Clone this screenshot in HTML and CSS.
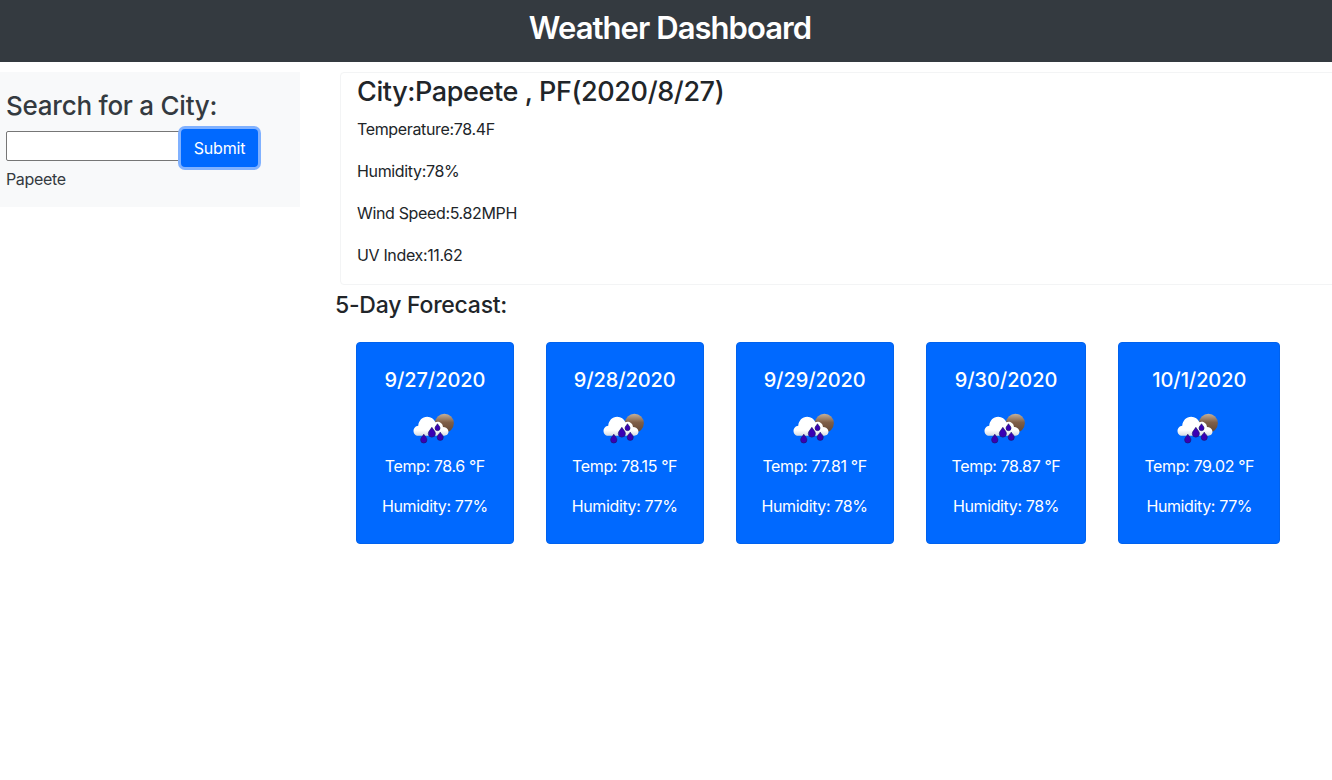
FILE: index.html
```html
<!DOCTYPE html>
<html lang="en">
<head>
    <meta charset="UTF-8">
    <meta name="viewport" content="width=device-width, initial-scale=1.0">
    <title>Weather Dashboard</title>
    <link rel="stylesheet" href="styles.css">
</head>
<body>
    <svg class="sprite" width="0" height="0">
        <defs>
            <linearGradient id="moon-fill" x1="0" y1="0" x2="0" y2="1">
                <stop offset="0" stop-color="#c4b09a"/>
                <stop offset="0.45" stop-color="#7f5f48"/>
                <stop offset="1" stop-color="#5f4636"/>
            </linearGradient>
            <linearGradient id="cloud-fill" x1="0" y1="0" x2="0" y2="1">
                <stop offset="0" stop-color="#ffffff"/>
                <stop offset="0.7" stop-color="#ffffff"/>
                <stop offset="1" stop-color="#d5dbe2"/>
            </linearGradient>
            <symbol id="rain-icon" viewBox="0 0 42 32">
                <circle cx="30" cy="10.5" r="9" fill="url(#moon-fill)"/>
                <path fill="url(#cloud-fill)" d="M5 22.5C2.2 22.5 .5 20.3 .5 17.9 .5 15.2 2.4 13 5 12.8 5.4 8.2 8.8 4.4 13.6 4.4 17.2 4.4 20 6.4 21.4 9.6 22.6 9 24.2 8.9 25.6 9.6 27.6 10.5 28.6 12.4 28.6 14.2 31 14.2 33.4 15.6 33.8 18 34.2 20.6 32.2 22.5 29.8 22.5Z"/>
                <path fill="#3a00b4" stroke="#1a1a6a" stroke-width=".6" d="M10.3 21C11.6 23.2 13.3 24.4 13.3 26.4A3 3 0 0 1 7.3 26.4C7.3 24.4 9 23.2 10.3 21Z"/>
                <path fill="#3a00b4" stroke="#1a1a6a" stroke-width=".6" d="M18 14.4C19.5 17 21.4 18.2 21.4 20.4A3.4 3.4 0 0 1 14.6 20.4C14.6 18.2 16.5 17 18 14.4Z"/>
                <path fill="#3a00b4" stroke="#1a1a6a" stroke-width=".6" d="M23.4 11C24.4 12.8 25.8 13.6 25.8 15.2A2.4 2.4 0 0 1 21 15.2C21 13.6 22.4 12.8 23.4 11Z"/>
                <path fill="#3a00b4" stroke="#1a1a6a" stroke-width=".6" d="M26 19C27.2 21 28.9 22 28.9 24A2.9 2.9 0 0 1 23.1 24C23.1 22 24.8 21 26 19Z"/>
            </symbol>
        </defs>
    </svg>

    <header class="header">
        <h1 class="title">Weather Dashboard</h1>
    </header>

    <div class="layout">
        <aside class="sidebar">
            <h2 class="search-title">Search for a City:</h2>
            <form class="search-form">
                <input class="search-input" type="text" aria-label="City">
                <button class="submit-btn" type="button">Submit</button>
            </form>
            <p class="history-item">Papeete</p>
        </aside>

        <main class="main">
            <section class="current">
                <h2 class="current-title">City:Papeete , PF(2020/8/27)</h2>
                <p class="current-row">Temperature:78.4F</p>
                <p class="current-row">Humidity:78%</p>
                <p class="current-row">Wind Speed:5.82MPH</p>
                <p class="current-row">UV Index:11.62</p>
            </section>

            <h3 class="forecast-title">5-Day Forecast:</h3>
            <div class="forecast">
                <div class="day-card">
                    <h4 class="day-date">9/27/2020</h4>
                    <svg class="day-icon"><use href="#rain-icon"/></svg>
                    <p class="day-text">Temp: 78.6 °F</p>
                    <p class="day-text">Humidity: 77%</p>
                </div>
                <div class="day-card">
                    <h4 class="day-date">9/28/2020</h4>
                    <svg class="day-icon"><use href="#rain-icon"/></svg>
                    <p class="day-text">Temp: 78.15 °F</p>
                    <p class="day-text">Humidity: 77%</p>
                </div>
                <div class="day-card">
                    <h4 class="day-date">9/29/2020</h4>
                    <svg class="day-icon"><use href="#rain-icon"/></svg>
                    <p class="day-text">Temp: 77.81 °F</p>
                    <p class="day-text">Humidity: 78%</p>
                </div>
                <div class="day-card">
                    <h4 class="day-date">9/30/2020</h4>
                    <svg class="day-icon"><use href="#rain-icon"/></svg>
                    <p class="day-text">Temp: 78.87 °F</p>
                    <p class="day-text">Humidity: 78%</p>
                </div>
                <div class="day-card">
                    <h4 class="day-date">10/1/2020</h4>
                    <svg class="day-icon"><use href="#rain-icon"/></svg>
                    <p class="day-text">Temp: 79.02 °F</p>
                    <p class="day-text">Humidity: 77%</p>
                </div>
            </div>
        </main>
    </div>
</body>
</html>
```

FILE: styles.css
```css
* {
    margin: 0;
    padding: 0;
    box-sizing: border-box;
}

html, body {
    overflow-x: hidden;
}

body {
    font-family: Inter, "Liberation Sans", sans-serif;
    font-size: 16px;
    line-height: 24px;
    color: #212529;
    background: #ffffff;
}

.sprite {
    display: block;
    height: 0;
}

.header {
    height: 62px;
    background: #343a40;
    display: flex;
    justify-content: center;
    padding-top: 9px;
}

.title {
    font-size: 31px;
    line-height: 38px;
    font-weight: 600;
    letter-spacing: -0.95px;
    color: #ffffff;
    margin-left: 8px;
}

.layout {
    display: flex;
    align-items: flex-start;
    gap: 40px;
    padding-top: 10px;
}

.sidebar {
    flex: 0 0 300px;
    height: 135px;
    background: #f8f9fa;
    padding: 18px 6px 0;
    color: #343a40;
}

.search-title {
    font-size: 26px;
    line-height: 32px;
    font-weight: 500;
    letter-spacing: -0.25px;
}

.search-form {
    display: flex;
    align-items: flex-start;
    margin-top: 9px;
}

.search-input {
    width: 175px;
    height: 30px;
    border: 1px solid #767676;
    border-radius: 2px;
    background: #ffffff;
}

.submit-btn {
    width: 77px;
    height: 38px;
    margin-top: -2px;
    border: none;
    border-radius: 4px;
    background: #0069ff;
    box-shadow: 0 0 0 3px #80b1ff;
    color: #ffffff;
    font-family: inherit;
    font-size: 16px;
    letter-spacing: -0.2px;
}

.history-item {
    letter-spacing: -0.35px;
}

.main {
    flex: 1;
    min-width: 0;
}

.current {
    width: 1010px;
    height: 213px;
    border: 1px solid #f3f4f5;
    border-radius: 4px;
    padding: 0 16px;
}

.current-title {
    font-size: 27px;
    line-height: 38px;
    font-weight: 500;
    letter-spacing: -0.4px;
    margin-bottom: 6px;
}

.current-row {
    margin-bottom: 18px;
    letter-spacing: -0.35px;
}

.forecast-title {
    font-size: 23px;
    line-height: 26px;
    font-weight: 500;
    letter-spacing: -0.25px;
    margin: 7px 0 0 -5px;
}

.forecast {
    display: flex;
    gap: 32px;
    margin: 24px 0 0 16px;
}

.day-card {
    background: #0069ff;
    border: 1px solid #0062ee;
    border-radius: 4px;
    height: 202px;
    padding: 25px 25px 0;
    color: #ffffff;
    text-align: center;
}

.day-date {
    font-size: 20px;
    line-height: 24px;
    font-weight: 500;
    letter-spacing: -0.1px;
}

.day-icon {
    display: block;
    width: 44px;
    height: 34px;
    margin: 20px auto 8px;
    margin-left: calc(50% - 22px);
}

.day-text {
    margin-bottom: 16px;
    letter-spacing: -0.38px;
    white-space: nowrap;
}
```
